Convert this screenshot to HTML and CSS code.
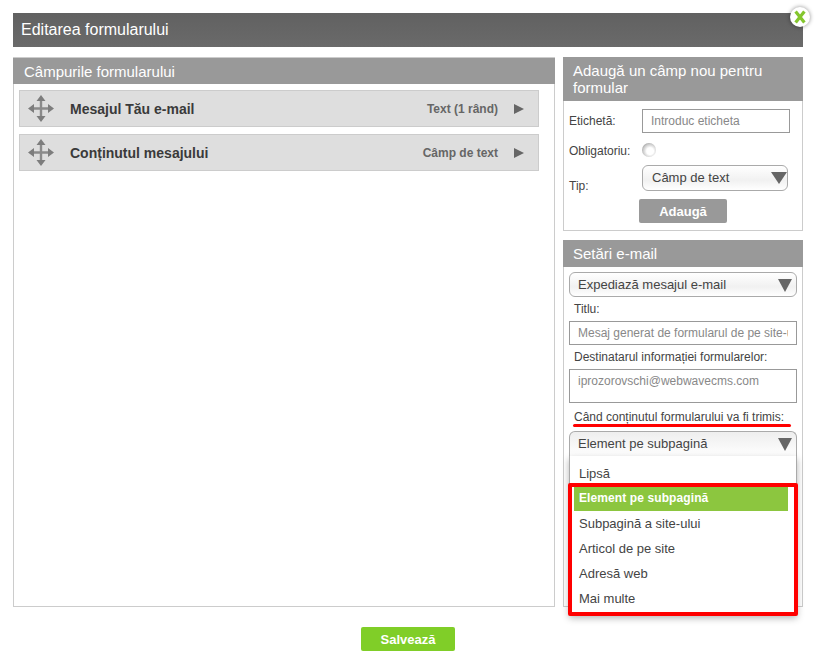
FILE: index.html
```html
<!DOCTYPE html>
<html lang="ro">
<head>
<meta charset="utf-8">
<title>Editarea formularului</title>
<link rel="stylesheet" href="styles.css">
</head>
<body>
<div class="page">
  <div class="titlebar">Editarea formularului
    <div class="close"><svg width="14" height="14" viewBox="0 0 14 14"><path d="M2.6 1.5 L11.4 12.5 M11.4 1.5 L2.6 12.5" stroke="#84c62e" stroke-width="3.2" fill="none"/></svg></div>
  </div>
  <div class="columns">
    <section class="left">
      <h2 class="head">Câmpurile formularului</h2>
      <div class="rows">
        <div class="row">
          <svg class="move" width="26" height="27" viewBox="0 0 26 27"><path d="M13 4 V23 M4 13.5 H22" stroke="#8a8a8a" stroke-width="2.4" fill="none"/><path d="M13 0 L17.5 6 H8.5 Z M13 27 L17.5 21 H8.5 Z M0 13.5 L6 9 V18 Z M26 13.5 L20 9 V18 Z" fill="#7d7d7d"/></svg>
          <span class="name">Mesajul Tău e-mail</span>
          <span class="kind">Text (1 rând)</span>
          <span class="arrow"></span>
        </div>
        <div class="row">
          <svg class="move" width="26" height="27" viewBox="0 0 26 27"><path d="M13 4 V23 M4 13.5 H22" stroke="#8a8a8a" stroke-width="2.4" fill="none"/><path d="M13 0 L17.5 6 H8.5 Z M13 27 L17.5 21 H8.5 Z M0 13.5 L6 9 V18 Z M26 13.5 L20 9 V18 Z" fill="#7d7d7d"/></svg>
          <span class="name">Conținutul mesajului</span>
          <span class="kind">Câmp de text</span>
          <span class="arrow"></span>
        </div>
      </div>
    </section>
    <aside class="right">
      <section class="panel add">
        <h2 class="head tall">Adaugă un câmp nou pentru formular</h2>
        <div class="add-body">
          <div class="field-label">Etichetă:</div>
          <input class="text-input" placeholder="Introduc eticheta">
          <div class="field-label">Obligatoriu:</div>
          <span class="radio"></span>
          <div class="field-label tip">Tip:</div>
          <div class="select">Câmp de text<span class="caret"></span></div>
          <button class="add-btn">Adaugă</button>
        </div>
      </section>
      <section class="panel mail">
        <h2 class="head">Setări e-mail</h2>
        <div class="mail-body">
          <div class="select first-select">Expediază mesajul e-mail<span class="caret"></span></div>
          <div class="mail-label first">Titlu:</div>
          <input class="text-input wide" placeholder="Mesaj generat de formularul de pe site-ului">
          <div class="mail-label">Destinatarul informației formularelor:</div>
          <div class="area">iprozorovschi@webwavecms.com</div>
          <div class="mail-label when">Când conținutul formularului va fi trimis:<span class="underline"></span></div>
          <div class="dropdown">
            <div class="select open">Element pe subpagină<span class="caret"></span></div>
            <ul class="options">
              <li>Lipsă</li>
              <li class="selected">Element pe subpagină</li>
              <li>Subpagină a site-ului</li>
              <li>Articol de pe site</li>
              <li>Adresă web</li>
              <li>Mai multe</li>
            </ul>
            <div class="redbox"></div>
          </div>
        </div>
      </section>
    </aside>
  </div>
  <div class="footer"><button class="save">Salvează</button></div>
</div>
</body>
</html>
```

FILE: styles.css
```css
* { box-sizing: border-box; }
html, body { margin: 0; padding: 0; background: #fff; }
body { font-family: "Liberation Sans", Arial, sans-serif; color: #444; overflow: hidden; height: 668px; }
.page { width: 815px; padding: 13px 12px 0 13px; }

.titlebar {
  position: relative; height: 34px; line-height: 33px; padding-left: 8px;
  font-size: 16px; color: #fff;
  background: linear-gradient(#616161, #6a6a6a);
}
.close {
  position: absolute; right: -7px; top: -6px; width: 20px; height: 20px; border-radius: 50%;
  background: #fff; box-shadow: 0 0 4px rgba(0,0,0,.45);
  display: flex; align-items: center; justify-content: center;
}

.columns { display: flex; gap: 8px; margin-top: 10px; }
.head {
  margin: 0; height: 27px; line-height: 27px; padding-left: 10px;
  font-size: 15px; font-weight: normal; color: #fff; background: #999;
}
.head.tall { height: 44px; line-height: 17px; padding: 5px 10px 0; }

.left { width: 542px; height: 550px; border: 1px solid #ccc; border-top-width: 0; }
.left .head { margin: 0 -1px; padding-left: 11px; border-top: 1px solid #ccc; }
.rows { padding: 6px 15px 0 5px; display: flex; flex-direction: column; gap: 7px; }
.row {
  height: 37px; display: flex; align-items: center;
  background: #dedede; border: 1px solid #ccc; font-size: 14px;
}
.move { margin-left: 8px; }
.name { margin-left: 16px; font-weight: bold; color: #3a3a3a; flex: 1; }
.kind { font-size: 12px; font-weight: bold; color: #666; }
.arrow {
  width: 0; height: 0; margin: 0 14px 0 16px;
  border-left: 10px solid #666; border-top: 5px solid transparent; border-bottom: 5px solid transparent;
}

.right { width: 240px; display: flex; flex-direction: column; gap: 9px; }
.panel { border: 1px solid #ccc; border-top: 0; }
.panel .head { margin: 0 -1px; }
.add { height: 174px; }
.add-body {
  display: grid; grid-template-columns: 73px 148px; grid-auto-rows: auto;
  padding: 8px 0 0 5px; font-size: 12px; position: relative;
}
.field-label { color: #444; line-height: 24px; }
.tip { padding-top: 11px; }
.text-input {
  height: 24px; width: 148px; border: 1px solid #999; padding: 0 8px; font: 12px "Liberation Sans", Arial, sans-serif;
  outline: 0; background: #fff; border-radius: 0;
}
.text-input::placeholder { color: #888; opacity: 1; }
.radio {
  width: 14px; height: 14px; border-radius: 50%; margin: 10px 0 0 0;
  background: radial-gradient(circle at 58% 58%, #fff 30%, #ccc 60%, #777 95%);
  align-self: start;
}
.field-label:nth-of-type(2) { margin-top: 6px; }
.select {
  position: relative; height: 26px; line-height: 24px; padding-left: 8px; font-size: 13px; color: #444;
  border: 1px solid #aaa; border-radius: 6px;
  background: linear-gradient(#fff 0%, #f1f1f1 60%, #fff 100%);
}
.add-body .select { margin: 2px 0 0 0; width: 146px; padding-left: 9px; }
.caret {
  position: absolute; right: 4px; top: 6px; width: 0; height: 0;
  border-top: 13px solid #666; border-left: 7px solid transparent; border-right: 7px solid transparent;
}
.add-body .caret {
  right: 0; top: 6px;
  border-top-width: 12px; border-left-width: 8px; border-right-width: 8px;
}
.add-btn {
  grid-column: 2; justify-self: start; margin: 7px 0 0 -3px; width: 88px; height: 24px;
  border: 0; border-radius: 2px; background: #999; color: #fff; font: bold 13px "Liberation Sans", Arial, sans-serif; padding: 0;
}
.add-body .add-btn { margin-top: 1px; }

.mail { height: 367px; }
.mail-body { padding: 5px 5px 0; font-size: 12px; }
.first-select { height: 25px; }
.mail-label { padding-left: 5px; line-height: 14px; margin: 5px 0 5px; color: #444; }
.mail-label.first { margin-bottom: 5px; margin-top: 5px; }
.text-input.wide { width: 228px; display: block; }
.area { height: 34px; border: 1px solid #999; padding: 3px 8px; color: #888; font-size: 12px; line-height: 16px; }
.when { position: relative; margin: 7px 0 7px; }
.underline {
  position: absolute; left: 4px; top: 14px; width: 218px; height: 3px; border-radius: 2px; background: #f00;
}
.dropdown { position: relative; }
.select.open { height: 26px; border-radius: 6px 6px 0 0; border-bottom: 0; background: linear-gradient(#eee, #fff); }
.options {
  list-style: none; margin: 0; padding: 5px 8px 0 4px; position: absolute; left: 0; right: 0; top: 25px; height: 159px;
  background: #fff; border: 1px solid #aaa; border-top: 0; font-size: 13px; box-shadow: 0 3px 7px rgba(0,0,0,.3);
}
.options li { height: 25px; line-height: 25px; padding-left: 5px; color: #444; }
.options .selected { background: #8cc63f; color: #fff; font-weight: bold; font-size: 12px; letter-spacing: .1px; }
.redbox { position: absolute; left: -1px; right: -1px; top: 52px; height: 133px; border: 4px solid #f00; border-radius: 2px; }

.footer { display: flex; justify-content: center; margin-top: 20px; }
.save {
  width: 94px; height: 24px; border: 0; border-radius: 2px; padding: 0; background: #80ce28;
  color: #fff; font: bold 13px "Liberation Sans", Arial, sans-serif;
}
```
